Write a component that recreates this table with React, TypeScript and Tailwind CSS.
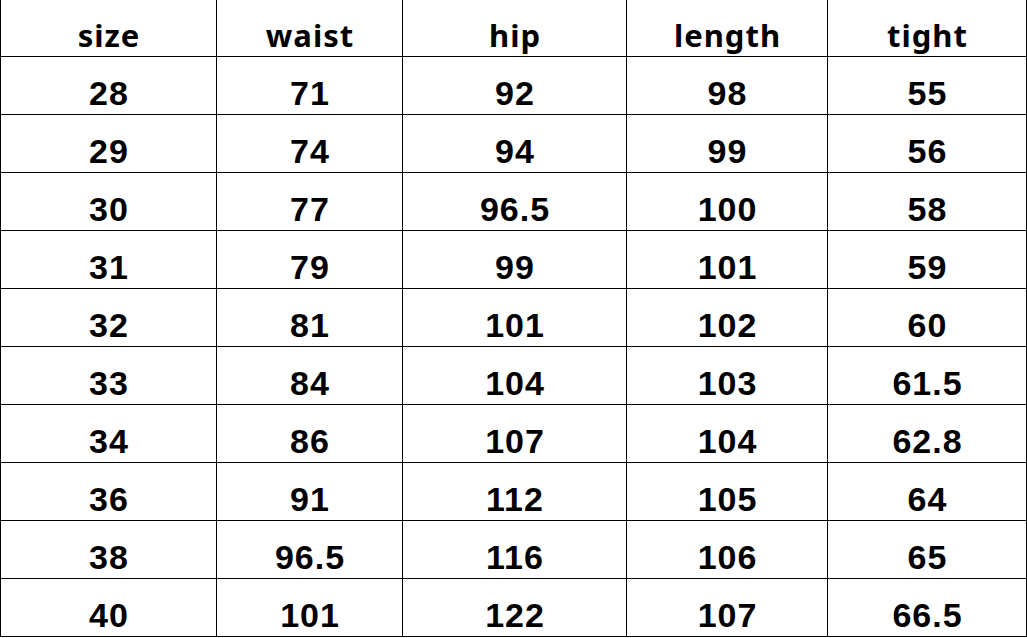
export default function App() {
  const header = ["size", "waist", "hip", "length", "tight"];
  const rows = [
    ["28", "71", "92", "98", "55"],
    ["29", "74", "94", "99", "56"],
    ["30", "77", "96.5", "100", "58"],
    ["31", "79", "99", "101", "59"],
    ["32", "81", "101", "102", "60"],
    ["33", "84", "104", "103", "61.5"],
    ["34", "86", "107", "104", "62.8"],
    ["36", "91", "112", "105", "64"],
    ["38", "96.5", "116", "106", "65"],
    ["40", "101", "122", "107", "66.5"],
  ];
  return (
    <div className="w-[1027px] h-[638px] overflow-hidden bg-white">
      <div className="grid grid-cols-[216px_186px_224px_201px_1fr] border-l border-black text-black">
        {header.map((h) => (
          <div
            key={h}
            className="h-[57px] border-r border-b border-black flex items-end justify-center pb-[5px] pl-[1px] text-[31px] leading-none font-bold tracking-[1px]"
            style={{ fontFamily: '"Noto Sans", "Liberation Sans", sans-serif' }}
          >
            {h}
          </div>
        ))}
        {rows.map((r, i) =>
          r.map((c, j) => (
            <div
              key={i + "-" + j}
              className="h-[58px] border-r border-b border-black flex items-end justify-center pb-[4px] pl-[1px] text-[34px] leading-none font-bold tracking-[1px] font-['Liberation_Sans',Arial,sans-serif]"
            >
              {c}
            </div>
          ))
        )}
      </div>
    </div>
  );
}
